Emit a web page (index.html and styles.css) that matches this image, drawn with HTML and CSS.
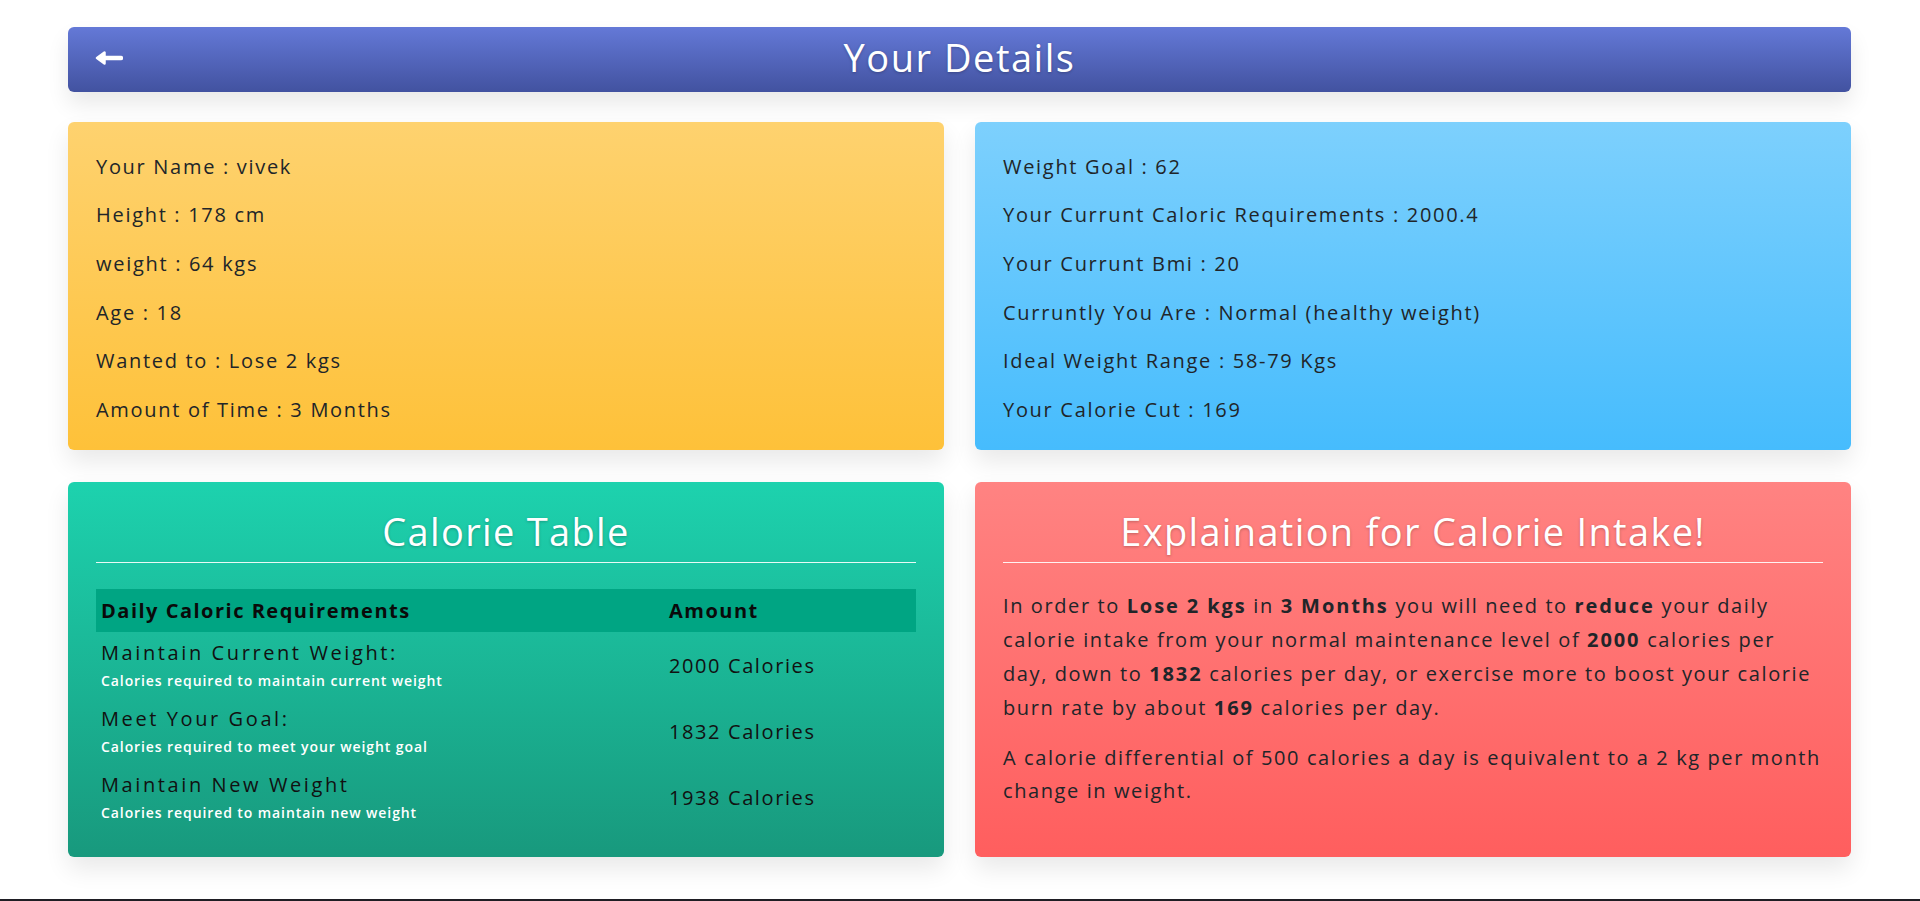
FILE: index.html
```html
<!DOCTYPE html>
<html lang="en">
<head>
<meta charset="utf-8">
<title>Your Details</title>
<link rel="stylesheet" href="styles.css">
</head>
<body>
<main class="page">
  <header class="topbar">
    <a class="back" href="#" aria-label="Back">
      <svg width="28" height="14" viewBox="0 0 28 14"><path d="M26 7H8" stroke="#fff" stroke-width="4.5" stroke-linecap="round"/><path d="M2 7L9.5 1.5V12.5Z" fill="#fff" stroke="#fff" stroke-width="2.5" stroke-linejoin="round"/></svg>
    </a>
    <h1 class="topbar-title">Your Details</h1>
  </header>

  <section class="grid">
    <div class="card card-yellow">
      <ul class="facts">
        <li>Your Name : vivek</li>
        <li>Height : 178 cm</li>
        <li>weight : 64 kgs</li>
        <li>Age : 18</li>
        <li>Wanted to : Lose 2 kgs</li>
        <li>Amount of Time : 3 Months</li>
      </ul>
    </div>
    <div class="card card-blue">
      <ul class="facts">
        <li>Weight Goal : 62</li>
        <li>Your Currunt Caloric Requirements : 2000.4</li>
        <li>Your Currunt Bmi : 20</li>
        <li>Curruntly You Are : Normal (healthy weight)</li>
        <li>Ideal Weight Range : 58-79 Kgs</li>
        <li>Your Calorie Cut : 169</li>
      </ul>
    </div>

    <div class="card card-green">
      <h2 class="card-title">Calorie Table</h2>
      <hr class="rule">
      <table class="cal-table">
        <thead>
          <tr><th class="col-name">Daily Caloric Requirements</th><th>Amount</th></tr>
        </thead>
        <tbody>
          <tr><td><div class="row-name">Maintain Current Weight:</div><div class="row-sub">Calories required to maintain current weight</div></td><td>2000 Calories</td></tr>
          <tr><td><div class="row-name">Meet Your Goal:</div><div class="row-sub">Calories required to meet your weight goal</div></td><td>1832 Calories</td></tr>
          <tr><td><div class="row-name">Maintain New Weight</div><div class="row-sub">Calories required to maintain new weight</div></td><td>1938 Calories</td></tr>
        </tbody>
      </table>
    </div>

    <div class="card card-red">
      <h2 class="card-title">Explaination for Calorie Intake!</h2>
      <hr class="rule">
      <p class="explain">In order to <b>Lose 2 kgs</b> in <b>3 Months</b> you will need to <b>reduce</b> your daily calorie intake from your normal maintenance level of <b>2000</b> calories per day, down to <b>1832</b> calories per day, or exercise more to boost your calorie burn rate by about <b>169</b> calories per day.</p>
      <p class="explain">A calorie differential of 500 calories a day is equivalent to a 2 kg per month change in weight.</p>
    </div>
  </section>
</main>
<footer class="footer"></footer>
</body>
</html>
```

FILE: styles.css
```css
html, body {
  margin: 0;
  padding: 0;
  background: #ffffff;
}

body {
  font-family: "Open Sans", "Liberation Sans", sans-serif;
  color: #212529;
}

.page {
  padding: 27px 69px 42px 68px;
}

.topbar {
  height: 65px;
  box-sizing: border-box;
  padding-bottom: 5px;
  border-radius: 6px;
  background: linear-gradient(to bottom, #6479d7, #4252a0);
  box-shadow: 0 12px 22px rgba(0, 0, 0, 0.09);
  display: flex;
  align-items: center;
  justify-content: center;
  position: relative;
}

.back {
  position: absolute;
  left: 27px;
  top: 24px;
  display: block;
  width: 28px;
  height: 14px;
  line-height: 0;
}

.topbar-title {
  margin: 0;
  color: #fff;
  font-weight: 400;
  font-size: 38px;
  line-height: 1;
  letter-spacing: 0.04em;
  text-shadow: 0 1px 3px rgba(0, 0, 0, 0.25);
}

.grid {
  margin-top: 30px;
  display: grid;
  grid-template-columns: 1fr 1fr;
  column-gap: 31px;
  row-gap: 32px;
}

.card {
  border-radius: 6px;
  box-shadow: 0 12px 24px rgba(0, 0, 0, 0.09);
  padding: 0 28px;
}

.card-yellow { background: linear-gradient(to bottom, #fed26f, #fec139); }
.card-blue { background: linear-gradient(to bottom, #7dd0fd, #46bcfd); }
.card-green { background: linear-gradient(to bottom, #1dd2ae, #18997d); }
.card-red { background: linear-gradient(to bottom, #ff8382, #ff5e5e); }

.facts {
  list-style: none;
  margin: 0;
  padding: 28.5px 0 24.5px;
  display: flex;
  flex-direction: column;
  gap: 16.7px;
}

.facts li {
  font-size: 20px;
  line-height: 32px;
  letter-spacing: 0.085em;
}

.card-title {
  margin: 25px 0 0;
  text-align: center;
  color: #fff;
  font-weight: 400;
  font-size: 38px;
  line-height: 48px;
  letter-spacing: 0.035em;
  text-shadow: 0 1px 3px rgba(0, 0, 0, 0.25);
}

.rule {
  border: 0;
  height: 1px;
  background: rgba(255, 255, 255, 0.9);
  margin: 7px 0 26px;
}

.cal-table {
  width: 100%;
  border-collapse: collapse;
  margin-bottom: 27px;
}

.cal-table th {
  background: #00a583;
  text-align: left;
  font-size: 20px;
  font-weight: 700;
  color: #0a0a0a;
  height: 43px;
  padding: 0 5px;
  letter-spacing: 0.075em;
}

.cal-table .col-name {
  width: 558px;
}

.cal-table td {
  padding: 7px 5px;
  vertical-align: middle;
  font-size: 20px;
  letter-spacing: 0.08em;
  color: #111;
}

.row-name {
  font-size: 20px;
  line-height: 28px;
  letter-spacing: 0.13em;
  color: #111;
}

.row-sub {
  margin-top: 3px;
  font-size: 14px;
  line-height: 21px;
  font-weight: 600;
  color: #fff;
  letter-spacing: 0.065em;
}

.explain {
  margin: 0 0 16px;
  font-size: 20px;
  line-height: 33.8px;
  letter-spacing: 0.08em;
}

.explain b {
  font-weight: 700;
  letter-spacing: 0.095em;
}

.footer {
  height: 160px;
  background: #1f1e24;
}
```
